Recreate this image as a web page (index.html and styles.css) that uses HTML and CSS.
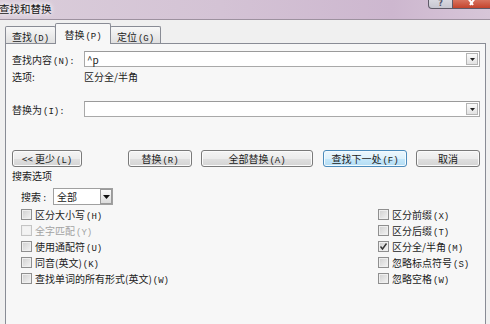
FILE: index.html
```html
<!DOCTYPE html>
<html lang="zh-CN">
<head>
  <meta charset="UTF-8">
  <meta name="viewport" content="width=device-width, initial-scale=1.0">
  <title>查找和替换</title>
  <link rel="stylesheet" href="styles.css">
</head>
<body>

<div class="window">
  <!-- Title bar -->
  <div class="titlebar">
    <span class="title">查找和替换</span>
    <div class="caption">
      <span class="cap-btn help">?</span>
      <span class="cap-btn close"><svg width="9" height="6" viewBox="0 0 9 6"><path d="M0.5 -2.5L6 5M8.5 -2.5L3 5" stroke="#fff" stroke-width="2" fill="none"/></svg></span>
    </div>
  </div>

  <div class="client">
    <!-- Tabs -->
    <div class="tabs">
      <div class="tab"><span>查找<span class="key">(D)</span></span></div>
      <div class="tab selected"><span>替换<span class="key">(P)</span></span></div>
      <div class="tab"><span>定位<span class="key">(G)</span></span></div>
    </div>

    <div class="panel">
      <div class="field-row">
        <span class="field-label">查找内容<span class="key">(N):</span></span>
        <div class="combo">
          <span class="combo-text">^p</span>
          <span class="drop"><svg width="5" height="3" viewBox="0 0 5 3"><path d="M0 0h5L2.5 3z" fill="#222"/></svg></span>
        </div>
      </div>
      <div class="options-row">
        <span class="field-label">选项:</span>
        <span>区分全/半角</span>
      </div>
      <div class="field-row replace-row">
        <span class="field-label">替换为<span class="key">(I):</span></span>
        <div class="combo">
          <span class="combo-text"></span>
          <span class="drop"><svg width="5" height="3" viewBox="0 0 5 3"><path d="M0 0h5L2.5 3z" fill="#222"/></svg></span>
        </div>
      </div>

      <!-- Buttons -->
      <div class="buttons">
        <div class="btn btn-less"><span>&lt;&lt; 更少<span class="key">(L)</span></span></div>
        <div class="btn btn-replace"><span>替换<span class="key">(R)</span></span></div>
        <div class="btn btn-all"><span>全部替换<span class="key">(A)</span></span></div>
        <div class="btn btn-next"><span>查找下一处<span class="key">(F)</span></span></div>
        <div class="btn btn-cancel"><span>取消</span></div>
      </div>

      <!-- Search options -->
      <div class="legend">搜索选项</div>
      <div class="search-row">
        <span class="search-label">搜索<span class="key">:</span></span>
        <div class="select">
          <span class="combo-text">全部</span>
          <span class="select-drop"><svg width="7" height="4" viewBox="0 0 7 4"><path d="M0 0h7L3.5 4z" fill="#111"/></svg></span>
        </div>
      </div>

      <div class="checks">
        <div class="check"><span class="box"></span><span>区分大小写<span class="key">(H)</span></span></div>
        <div class="check disabled"><span class="box"></span><span>全字匹配<span class="key">(Y)</span></span></div>
        <div class="check"><span class="box"></span><span>使用通配符<span class="key">(U)</span></span></div>
        <div class="check"><span class="box"></span><span>同音(英文)<span class="key">(K)</span></span></div>
        <div class="check"><span class="box"></span><span>查找单词的所有形式(英文)<span class="key">(W)</span></span></div>

        <div class="check"><span class="box"></span><span>区分前缀<span class="key">(X)</span></span></div>
        <div class="check"><span class="box"></span><span>区分后缀<span class="key">(T)</span></span></div>
        <div class="check"><span class="box checked"><svg width="9" height="9" viewBox="0 0 9 9"><path d="M1.5 4.5L3.5 7L7.5 1.5" fill="none" stroke="#333" stroke-width="1.4"/></svg></span><span>区分全/半角<span class="key">(M)</span></span></div>
        <div class="check"><span class="box"></span><span>忽略标点符号<span class="key">(S)</span></span></div>
        <div class="check"><span class="box"></span><span>忽略空格<span class="key">(W)</span></span></div>
      </div>
    </div>
  </div>
</div>

</body>
</html>
```

FILE: styles.css
```css
* {
  box-sizing: border-box;
}
body {
  margin: 0;
  background-color: #f0f0f0;
  font-family: "Noto Sans CJK SC", sans-serif;
  font-size: 10px;
  color: #1b1b1b;
}
.window {
  width: 490px;
  height: 324px;
  overflow: hidden;
  display: flex;
  flex-direction: column;
}

/* title bar */
.titlebar {
  height: 20px;
  flex: none;
  display: flex;
  align-items: center;
  background: linear-gradient(to right, #dacdda, #d4c3d5 45%, #cdb7cf 80%, #d7c6d8);
  border-bottom: 1px solid #9d919f;
}
.title {
  font-size: 10.5px;
  margin-left: -1px;
  padding-bottom: 2px;
  color: #151515;
  text-shadow: 0 0 4px #fff, 0 0 6px #fff;
}
.caption {
  margin-left: auto;
  align-self: flex-start;
  display: flex;
  height: 9px;
}
.cap-btn {
  height: 9px;
  display: flex;
  justify-content: center;
  align-items: flex-end;
  border: 1px solid #5f5a68;
  border-top: none;
}
.help {
  width: 25px;
  font-family: "DejaVu Sans", sans-serif;
  font-weight: bold;
  font-size: 8px;
  line-height: 8px;
  color: #55556a;
  background: linear-gradient(#d8d8e0, #c6c6d0);
  border-radius: 0 0 0 4px;
}
.close {
  width: 37px;
  padding-bottom: 2px;
  border-left: none;
  border-right: none;
  background: linear-gradient(#d8735f, #c4442d);
}

/* tabs */
.client {
  flex: 1;
  display: flex;
  flex-direction: column;
  padding: 3px 4px 0 5px;
}
.tabs {
  display: flex;
  align-items: flex-end;
  height: 20px;
  flex: none;
}
.tab {
  width: 51px;
  height: 17px;
  display: flex;
  align-items: center;
  justify-content: center;
  padding-top: 2px;
  border: 1px solid #898c95;
  border-bottom: none;
  border-radius: 2px 2px 0 0;
  background: linear-gradient(#f8f8f8, #ececec 50%, #e0e0e0);
}
.tab + .tab {
  margin-left: -1px;
}
.tab.selected {
  width: 56px;
  height: 21px;
  padding-top: 0;
  margin-bottom: -1px;
  background: #f7f7f7;
  position: relative;
  z-index: 1;
}
.key {
  font-family: "Liberation Mono", monospace;
  font-size: 9px;
  margin-left: 1px;
}

/* panel */
.panel {
  flex: none;
  height: 290px;
  border: 1px solid #898c95;
  background-color: #f7f7f7;
  padding: 7px 5px 0 6px;
}
.field-row, .options-row {
  display: flex;
  align-items: center;
  height: 16px;
}
.options-row {
  margin-top: 1px;
}
.replace-row {
  margin-top: 17px;
}
.field-label {
  width: 72px;
  flex: none;
}
.combo {
  flex: 1;
  height: 16px;
  display: flex;
  align-items: center;
  padding-left: 2px;
  background-color: #fff;
  border: 1px solid #a9a9a9;
  border-top-color: #9a9a9a;
}
.combo-text {
  flex: 1;
}
.drop {
  width: 12px;
  height: 12px;
  margin-right: 1px;
  display: flex;
  align-items: center;
  justify-content: center;
  border: 1px solid #b4b4b4;
  background: linear-gradient(#fbfbfb, #e2e2e2);
}

/* buttons */
.buttons {
  display: flex;
  height: 17px;
  margin-top: 33px;
}
.btn {
  height: 17px;
  display: flex;
  align-items: center;
  justify-content: center;
  border: 1px solid #7a7a7a;
  border-radius: 3px;
  background: linear-gradient(#f4f4f4, #ececec 50%, #e0e0e0 51%, #d4d4d4);
  box-shadow: inset 0 0 0 1px #fbfbfb;
}
.btn-less {
  width: 70px;
}
.btn-replace {
  width: 64px;
  margin-left: 46px;
}
.btn-all {
  width: 112px;
  margin-left: 9px;
}
.btn-next {
  width: 84px;
  margin-left: 10px;
  border-color: #4c8bbb;
  background: linear-gradient(#edf7fd, #ddf1fc 50%, #c6e8fb 51%, #b3dcf3);
  box-shadow: inset 0 0 0 1px #f3fbff;
}
.btn-cancel {
  width: 64px;
  margin-left: 9px;
}

/* search options */
.legend {
  height: 14px;
  line-height: 14px;
  margin-top: 2px;
}
.search-row {
  display: flex;
  align-items: center;
  height: 17px;
  margin-top: 5px;
  padding-left: 9px;
}
.search-label {
  width: 32px;
  flex: none;
}
.select {
  width: 60px;
  height: 17px;
  display: flex;
  align-items: center;
  padding-left: 3px;
  background-color: #fff;
  border: 1px solid #a0a0a0;
}
.select-drop {
  width: 12px;
  height: 15px;
  display: flex;
  align-items: center;
  justify-content: center;
  border: 1px solid #9a9a9a;
  background: linear-gradient(#fafafa, #dcdcdc);
}
.checks {
  display: grid;
  grid-template-columns: 357px auto;
  grid-template-rows: repeat(5, 16px);
  grid-auto-flow: column;
  margin-top: 1px;
  padding-left: 9px;
}
.check {
  display: flex;
  align-items: center;
}
.box {
  width: 11px;
  height: 11px;
  flex: none;
  margin-right: 3px;
  display: flex;
  align-items: center;
  justify-content: center;
  border: 1px solid #8f8f8f;
  background: linear-gradient(135deg, #cfcfcf, #f4f4f4);
  box-shadow: inset 0 0 0 1px #efefef;
}
.disabled {
  color: #a3a3a3;
}
.disabled .box {
  border-color: #c4c4c4;
  background: #f3f3f3;
}
```
